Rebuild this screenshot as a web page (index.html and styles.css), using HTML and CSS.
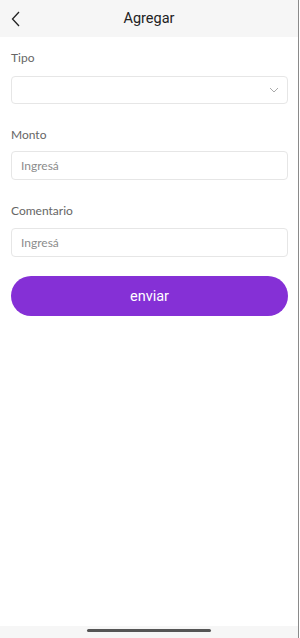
FILE: index.html
```html
<!DOCTYPE html>
<html lang="es">
<head>
    <meta charset="UTF-8">
    <meta name="viewport" content="width=device-width, initial-scale=1.0">
    <title>Agregar</title>
    <link rel="stylesheet" href="styles.css">
</head>
<body>
    <div class="screen">
        <header class="topbar">
            <button class="back" aria-label="Volver">
                <svg width="10" height="16" viewBox="0 0 10 16">
                    <path d="M8 1 L1.5 8 L8 15" fill="none" stroke="#222" stroke-width="1.3"/>
                </svg>
            </button>
            <h1>Agregar</h1>
        </header>

        <form class="form">
            <div class="field">
                <label>Tipo</label>
                <div class="select">
                    <svg width="10" height="6" viewBox="0 0 10 6">
                        <path d="M1 1 L5 5 L9 1" fill="none" stroke="#aaa" stroke-width="1"/>
                    </svg>
                </div>
            </div>
            <div class="field">
                <label>Monto</label>
                <input type="text" placeholder="Ingresá">
            </div>
            <div class="field">
                <label>Comentario</label>
                <input type="text" placeholder="Ingresá">
            </div>
            <button type="button" class="submit">enviar</button>
        </form>

        <div class="homebar"><span></span></div>
    </div>
</body>
</html>
```

FILE: styles.css
```css
body {
    margin: 0;
    background-color: #fff;
    font-family: Lato, "Noto Sans", sans-serif;
}
.screen {
    width: 298px;
    min-height: 638px;
    border-right: 1px solid #8a8a8a;
    display: flex;
    flex-direction: column;
}
.topbar {
    height: 37px;
    background-color: #f6f6f6;
    display: flex;
    align-items: center;
    justify-content: center;
    position: relative;
}
.topbar h1 {
    margin: 0;
    font-family: Roboto, sans-serif;
    font-weight: 400;
    font-size: 14.5px;
    color: #222;
}
.back {
    position: absolute;
    left: 11px;
    top: 11px;
    padding: 0;
    border: none;
    background: none;
    display: flex;
}
.form {
    padding: 13px 10px 0 11px;
    display: flex;
    flex-direction: column;
}
.field {
    display: flex;
    flex-direction: column;
    margin-bottom: 23px;
}
.field label {
    font-size: 12px;
    line-height: 16px;
    color: #666;
    margin-bottom: 10px;
}
.select, input {
    box-sizing: border-box;
    height: 28px;
    border: 1px solid #e6e6e6;
    border-radius: 4px;
    background-color: #fff;
}
.select {
    display: flex;
    align-items: center;
    justify-content: flex-end;
    padding-right: 8px;
}
input {
    width: 100%;
    padding: 0 9px;
    font-family: Lato, "Noto Sans", sans-serif;
    font-size: 12px;
    color: #333;
    outline: none;
}
input::placeholder {
    color: #8c8c8c;
}
.field:nth-child(2) label {
    margin-bottom: 8px;
}
.field:nth-child(2) input {
    height: 29px;
}
.field:nth-child(3) {
    margin-bottom: 19px;
}
.field:nth-child(3) label {
    margin-bottom: 9px;
}
.field:nth-child(3) input {
    height: 29px;
}
.submit {
    height: 40px;
    border: none;
    border-radius: 20px;
    background-color: #8530d6;
    color: #fff;
    font-family: Roboto, sans-serif;
    font-size: 14.5px;
    cursor: pointer;
}
.homebar {
    margin-top: auto;
    height: 12px;
    background-color: #f6f6f6;
    display: flex;
    justify-content: center;
    padding-top: 3px;
    box-sizing: border-box;
}
.homebar span {
    width: 124px;
    height: 3px;
    border-radius: 2px;
    background-color: #555;
}
```
